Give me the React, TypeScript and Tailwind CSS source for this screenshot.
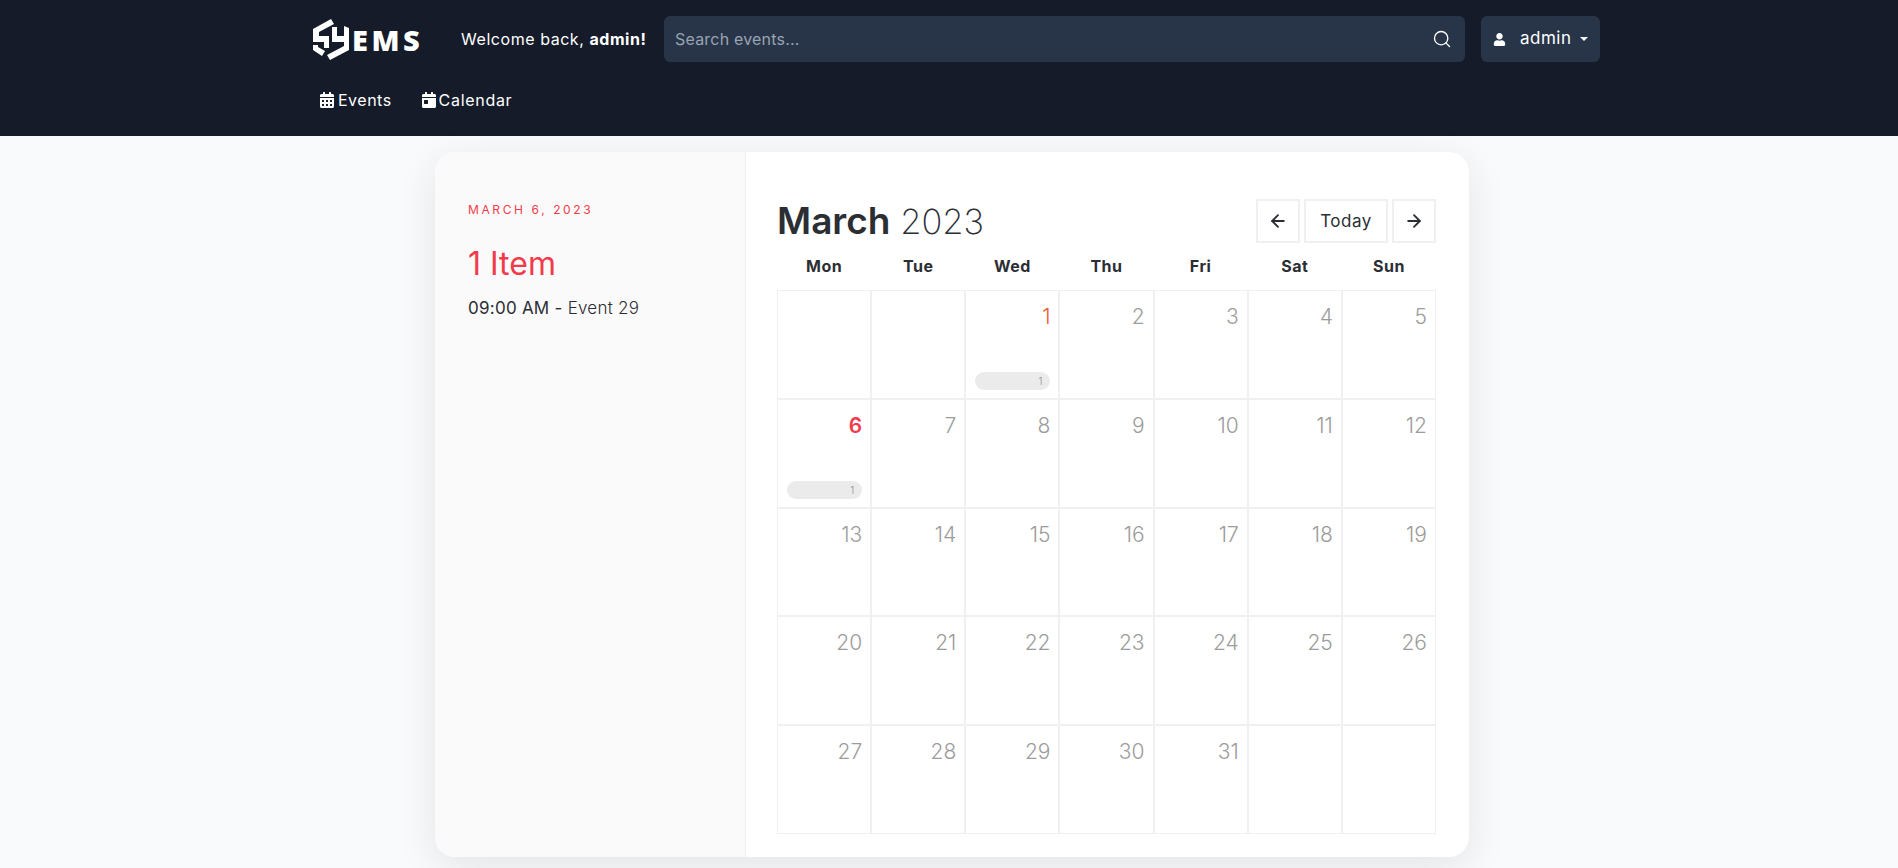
import { ArrowLeft, ArrowRight, Search } from "lucide-react";
import { FaCalendarAlt, FaCalendarDay, FaUser } from "react-icons/fa";

const font = { fontFamily: "Inter, 'Liberation Sans', sans-serif" };

function Logo() {
  return (
    <svg width="36" height="41" viewBox="0 0 36 41" fill="#fff" className="shrink-0">
      <polygon points="0,10 18,0 21,5 6,13 6,17 16,17 16,29 11,29 11,23 0,23" />
      <polygon points="0,26 5,26 5,28 12,32 9,37 0,31" />
      <polygon points="19,8 24,8 24,17 31,17 31,7 36,9 36,31 17,41 14,36 31,27 31,23 19,23" />
    </svg>
  );
}

function Cell({ day, kind, count }: { day?: number; kind?: "active" | "today"; count?: number }) {
  const color =
    kind === "today"
      ? "text-[#f33a4b] font-semibold"
      : kind === "active"
        ? "text-[#e8603c] font-light"
        : "text-[#9c9c9c] font-light";
  return (
    <div className="border border-[#f0f0f0] h-[108.8px] flex flex-col justify-between pt-[11px] pr-[8px] pb-[8px] pl-[9px]">
      <div className={`text-right text-[21px] leading-[30px] ${color}`}>{day}</div>
      {count ? (
        <div className="h-[18px] rounded-full bg-[#ebebeb] text-right pr-[8px] text-[10px] leading-[18px] font-light text-[#8a8a8a]">
          {count}
        </div>
      ) : null}
    </div>
  );
}

export default function App() {
  const days: (number | undefined)[] = [undefined, undefined];
  for (let d = 1; d <= 31; d++) days.push(d);
  days.push(undefined, undefined);
  const heads = ["Mon", "Tue", "Wed", "Thu", "Fri", "Sat", "Sun"];

  return (
    <div style={font} className="h-[868px] overflow-hidden bg-[#f9fafb]">
      <header className="h-[136px] bg-[#151b29] text-white">
        <div className="w-[1300px] ml-[300px] pt-4">
          <div className="flex items-center h-[46px]">
            <div className="flex items-center pl-[13px] w-[161px]">
              <Logo />
              <span className="ml-[3px] text-[29px] font-extrabold tracking-[3.5px] leading-none" style={{ fontFamily: "'Open Sans', sans-serif" }}>
                EMS
              </span>
            </div>
            <div className="w-[203px] text-[16px] whitespace-nowrap tracking-[0.55px]">
              Welcome back, <b className="font-bold">admin!</b>
            </div>
            <div className="w-[801px] h-[46px] rounded-md bg-[#283548] flex items-center justify-between pl-[11px] pr-[13px]">
              <span className="text-[16px] tracking-[0.2px] text-[#9aa3b2]">Search events...</span>
              <Search size={20} strokeWidth={1.6} color="#fff" />
            </div>
            <div className="ml-4 w-[119px] h-[46px] rounded-md bg-[#283548] flex items-center pl-[12px]">
              <FaUser size={13} />
              <span className="ml-[14px] text-[17px] tracking-[0.5px]">admin</span>
              <span className="ml-[8px] w-0 h-0 border-x-[4.5px] border-x-transparent border-t-[4.5px] border-t-white" />
            </div>
          </div>
          <nav className="flex items-center mt-[26px] pl-[19px] text-[16px] h-[24px] tracking-[0.5px]">
            <span className="flex items-center gap-[3px]">
              <FaCalendarAlt size={16} />
              Events
            </span>
            <span className="flex items-center gap-[2px] ml-[29px] tracking-[0.7px]">
              <FaCalendarDay size={16} />
              Calendar
            </span>
          </nav>
        </div>
      </header>
      <main className="pt-4">
        <div className="ml-[435px] w-[1034px] h-[705px] flex bg-white rounded-[20px] shadow-[0_10px_40px_rgba(0,0,0,0.09)] overflow-hidden">
          <aside className="w-[311px] shrink-0 bg-[#fafafa] border-r border-[#f0f0f0] pl-[33px] pt-[50px]">
            <div className="text-[12px] leading-[16px] tracking-[2.6px] text-[#f33a4b]">MARCH 6, 2023</div>
            <div className="mt-[23px] text-[32px] leading-[46px] text-[#f33a4b]">1 Item</div>
            <div className="mt-[9px] text-[17px] leading-[24px] text-[#2b2e33] tracking-[0.25px]">
              09:00 AM - <span className="font-light">Event 29</span>
            </div>
          </aside>
          <section className="flex-1 pl-[31px] pr-[33px] pt-[47px]">
            <div className="flex items-center justify-between h-[44px]">
              <h1 className="text-[34.5px] leading-[44px] text-[#2b2e33]">
                <span className="font-semibold text-[37px]">March</span>{" "}
                <span className="font-[250]">2023</span>
              </h1>
              <div className="flex items-center gap-[4px]">
                <button className="w-[44px] h-[44px] border-2 border-[#f0f0f0] flex items-center justify-center text-[#2b2e33]">
                  <ArrowLeft size={20} strokeWidth={2.2} />
                </button>
                <button className="w-[84px] h-[44px] border-2 border-[#f0f0f0] pt-[2px] text-[17px] tracking-[0.5px] text-[#2b2e33]">Today</button>
                <button className="w-[44px] h-[44px] border-2 border-[#f0f0f0] flex items-center justify-center text-[#2b2e33]">
                  <ArrowRight size={20} strokeWidth={2.2} />
                </button>
              </div>
            </div>
            <div className="grid grid-cols-7 h-[47px] items-center pb-[2px]">
              {heads.map((h) => (
                <div key={h} className="text-center text-[16px] font-bold text-[#2b2e33] leading-[24px] tracking-[0.5px]">
                  {h}
                </div>
              ))}
            </div>
            <div className="grid grid-cols-7">
              {days.map((d, i) => (
                <Cell key={i} day={d} kind={d === 6 ? "today" : d === 1 ? "active" : undefined} count={d === 1 || d === 6 ? 1 : undefined} />
              ))}
            </div>
          </section>
        </div>
      </main>
    </div>
  );
}
